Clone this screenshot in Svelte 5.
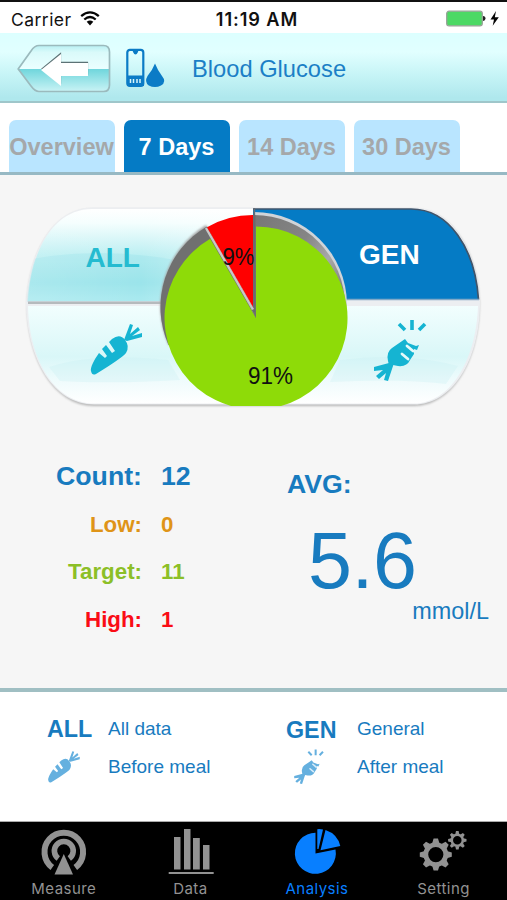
<script>
  const tabs = ['Overview', '7 Days', '14 Days', '30 Days'];
  const active = '7 Days';
  const stats = [
    { label: 'Count:', value: '12', kind: 'count' },
    { label: 'Low:', value: '0', kind: 'low' },
    { label: 'Target:', value: '11', kind: 'target' },
    { label: 'High:', value: '1', kind: 'high' }
  ];
  const teeth = [0, 45, 90, 135, 180, 225, 270, 315];
</script>

{#snippet carrot()}
  <path d="M2 49 C1 46 5 38 10 31 L16 36 L18 34 L13 27 L17 23 L23 31 L26 29 L20 20 L23 17 Q31 11 36 18 Q41 24 37 31 Q33 36 7 52 Q3 54 2 49Z" />
  <path d="M35 18 L41 2 L44 3 L41 12 L49 5 L51 8 L43 14 L53 11 L53 15 L38 19Z" />
{/snippet}

{#snippet bitten()}
  <path d="M17 45 L15 37 Q13 28 19 24 L32 15 L35 19 L43 22 L46 21 L44 26 L41 25 L41 30 L37 36 Q34 43 25 42 L20 41Z" />
  <path d="M29 30 L35 35 M34 22 L40 27" class="cut" />
  <path d="M21 39 L15 57 L11 56 L13 49 L6 55 L3 52 L10 46 L1 47 L1 43 L16 39Z" />
  <path d="M26 0 L32 6 M39 -4 V6 M52 0 L46 6" class="ray" />
{/snippet}

<div class="phone">
  <div class="status">
    <div class="carrier">
      <span>Carrier</span>
      <svg width="20" height="15" viewBox="0 0 20 15">
        <path d="M1.2 5.2 Q10-2.4 18.8 5.2M4.3 8.5 Q10 3.6 15.7 8.5" fill="none" stroke="#050505" stroke-width="2.3" />
        <path d="M6.7 10.8 Q10 8.2 13.3 10.8 L10 14.5Z" fill="#050505" />
      </svg>
    </div>
    <div class="time">11:19 AM</div>
    <svg class="battery" width="54" height="18" viewBox="0 0 54 18">
      <rect x=".7" y="1.2" width="35.6" height="14.6" rx="2.4" fill="#4cd964" stroke="#98a398" stroke-width="1.3" />
      <path d="M37 6 Q39.5 6 39.5 8.6 Q39.5 11 37 11Z" fill="#222" />
      <path d="M50 1 L44.5 9.4 H48 L46.7 15.8 L52.8 7.2 H48.8Z" fill="#050505" />
    </svg>
  </div>

  <header>
    <svg class="back" width="94" height="50" viewBox="0 0 94 50">
      <defs>
        <linearGradient id="glass" x2="0" y2="1">
          <stop offset="0" stop-color="#b8f0f3" /><stop offset=".15" stop-color="#dafafa" />
          <stop offset=".5" stop-color="#eaffff" /><stop offset=".51" stop-color="#6fd6dc" />
          <stop offset="1" stop-color="#c9f3f5" />
        </linearGradient>
      </defs>
      <path d="M1.2 25 L14 7 Q17.5 1.5 22 1.5 H86.5 Q92.5 1.5 92.5 8 V41 Q92.5 47.5 86.5 47.5 H22 Q18 47.5 14 42Z" fill="url(#glass)" stroke="#9bbabd" stroke-width="1.7" />
      <path d="M24 25 L44 8.5 V18 H71 V31 H44 V40 L24 25" fill="#5c7275" transform="translate(.1 -.2)" />
      <path d="M24 26 L44 10 V19 H71 V32 H44 V42Z" fill="#fff" />
    </svg>
    <svg class="meter" width="40" height="40" viewBox="0 0 40 40">
      <rect x="1.3" y="1.8" width="16" height="36" rx="2.6" fill="none" stroke="#0b7bc6" stroke-width="2.2" />
      <path d="M5 1 Q7 2 7 4 Q9.5 9 12 4 Q12 2 14 1Z" fill="#0b7bc6" />
      <path d="M1 27.5 H18 V38 H1Z" fill="#0b7bc6" />
      <path d="M4.5 31 V35 M7.5 31 V35 M11 31 V35 M14 31 V35" stroke="#d8f5fb" stroke-width="1.5" />
      <path d="M29 15.5 Q31.5 22 36 28 Q41 34 35 37.5 Q29 40.5 22.8 37.5 Q18 34 21.5 28 Q26.5 22 29 15.5Z" fill="#0b7bc6" />
    </svg>
    <h1>Blood Glucose</h1>
  </header>

  <nav class="tabs">
    {#each tabs as tab}
      <div class="tab" class:active={tab === active}>{tab}</div>
    {/each}
  </nav>

  <main>
    <svg class="chart" width="507" height="240" viewBox="0 174 507 240">
      <defs>
        <linearGradient id="all" x2="0" y2="1">
          <stop offset="0" stop-color="#fff" /><stop offset=".15" stop-color="#f4fefe" />
          <stop offset=".5" stop-color="#bceff2" /><stop offset=".8" stop-color="#a3e7ed" />
          <stop offset="1" stop-color="#b6eef3" />
        </linearGradient>
        <linearGradient id="meal" x2="0" y2="1">
          <stop offset="0" stop-color="#f2fefe" /><stop offset=".52" stop-color="#d9f7f8" />
          <stop offset=".75" stop-color="#eefbfc" /><stop offset="1" stop-color="#fff" />
        </linearGradient>
        <linearGradient id="side">
          <stop offset="0" stop-color="#fff" stop-opacity=".15" /><stop offset=".5" stop-color="#fff" stop-opacity="0" />
          <stop offset="1" stop-color="#fff" stop-opacity=".45" />
        </linearGradient>
        <linearGradient id="rim" x1="0" x2="1" y2=".8">
          <stop offset="0" stop-color="#777" /><stop offset=".45" stop-color="#858585" />
          <stop offset=".7" stop-color="#a8a8a8" /><stop offset="1" stop-color="#777" />
        </linearGradient>
        <filter id="soft" x="-5%" y="-5%" width="110%" height="110%"><feGaussianBlur stdDeviation="1" /></filter>
        <clipPath id="upper"><path d="M27 302 C30 248 55 209 92 209 H253 V302Z" /></clipPath>
        <clipPath id="lower"><rect x="150" y="180" width="220" height="226" /></clipPath>
      </defs>
      <path d="M27 303 C30 247 57 209 93 209 H413 C451 209 477 249 479.5 302 C480 362 451 406 414 406 H94 C54 406 27 360 27 303Z" fill="#b5b5b5" filter="url(#soft)" />
      <path d="M26 303 C29 247 56 207.5 92 207.5 H413 C451 208 477 249 480 302 C480 362 451 404.5 414 404.5 H94 C54 404.5 27 360 26 303Z" fill="#eceef1" />
      <path d="M28 301 C31 248 55 209 92 209 H253 V301Z" fill="url(#all)" />
      <path d="M20 261 Q103 244 190 263 V302 H20Z" fill="#80dce3" opacity=".22" clip-path="url(#upper)" />
      <path d="M28 301 C31 248 55 209 92 209 H253 V301Z" fill="url(#side)" />
      <path d="M28 306 H478 C476 362 449 403.5 414 403.5 H94 C56 403.5 29 362 28 306Z" fill="url(#meal)" />
      <path d="M49 367 Q95 352 168 360 L180 380 Q110 384 60 381Z M340 360 Q405 352 458 366 L446 384 Q400 378 330 382Z" fill="#c8eff1" opacity=".3" />
      <path d="M28 302.8 H170" stroke="#b5babd" stroke-width="2.4" />
      <path d="M253 209 H411 C449 209 475 248 478.5 299.5 H253Z" fill="#057bc5" />
      <path d="M253 209 H411 C449 209 475 248 478.5 299.5" fill="none" stroke="#40546a" stroke-width="1.7" />
      <path d="M345 299.5 H479" stroke="#82a9c7" stroke-width="1.3" />
      <path d="M254 212 A93 93 0 0 1 347 304 L345 320 H254Z" fill="#d0d4d8" />
      <path d="M254 215 A91 91 0 0 1 345 306 L344 320 H254Z" fill="url(#rim)" />
      <path d="M206 225 A95 95 0 0 0 168.5 345 L256 318Z" fill="#a5a5a5" filter="url(#soft)" />
      <path d="M207 226.5 A93 93 0 0 0 168.5 345 L256 318Z" fill="#707070" />
      <g clip-path="url(#lower)">
        <path d="M256 318 L256 226.5 A91.5 91.5 0 1 1 210.2 238.8Z" fill="#8edb08" />
      </g>
      <path d="M208 230 L256 318 L255.4 215 H253 V307Z" fill="#707070" />
      <path d="M254.3 208 V312" stroke="#666b72" stroke-width="1.7" />
      <path d="M206 228 L253 309.5" stroke="#c8c8c8" stroke-width="2.4" />
      <path d="M253 307 L207 227.2 A92 92 0 0 1 253 215Z" fill="#f00" />
      <g class="label" font-size="23">
        <text x="222.5" y="265" textLength="32" lengthAdjust="spacingAndGlyphs">9%</text>
        <text x="248" y="384" textLength="45" lengthAdjust="spacingAndGlyphs">91%</text>
      </g>
      <g font-size="28" font-weight="700">
        <text x="85.5" y="266.5" fill="#25bbd0">ALL</text>
        <text x="359" y="264" fill="#fff">GEN</text>
      </g>
      <g transform="translate(89 322)" class="veg">{@render carrot()}</g>
      <g transform="translate(373 324)" class="veg">{@render bitten()}</g>
    </svg>

    <section class="summary">
      <div class="stats">
        {#each stats as s}
          <div class="row {s.kind}"><span>{s.label}</span><b>{s.value}</b></div>
        {/each}
      </div>
      <div class="average">
        <div class="avg">AVG:</div>
        <div class="number">5.6</div>
        <div class="unit">mmol/L</div>
      </div>
    </section>
  </main>

  <section class="legend">
    <div class="key"><b>ALL</b><span>All data</span></div>
    <div class="key second"><b class="low-set">GEN</b><span>General</span></div>
    <div class="key">
      <i><svg width="34" height="34" viewBox="0 0 55 55">{@render carrot()}</svg></i><span>Before meal</span>
    </div>
    <div class="key second">
      <i class="eaten"><svg width="36" height="35" viewBox="0 -5 58 62">{@render bitten()}</svg></i><span>After meal</span>
    </div>
  </section>

  <footer>
    <div class="item">
      <svg width="50" height="50" viewBox="0 0 50 50">
        <g fill="none" stroke="#929292">
          <path d="M14.3 38.5 A19.3 19.3 0 1 1 37.3 38.5" stroke-width="6" />
          <path d="M20.3 29.5 A9.4 9.4 0 1 1 31.3 29.5" stroke-width="5.6" />
        </g>
        <path d="M25.8 25 L35 45.5 H16.5Z" fill="#929292" stroke="#000" stroke-width="3" paint-order="stroke" />
      </svg>
      <span>Measure</span>
    </div>
    <div class="item">
      <svg width="50" height="50" viewBox="0 0 50 50">
        <path d="M9 8 H15.5 V40.5 H9Z M19 0 H25.5 V40.5 H19Z M28 9 H34.8 V40.5 H28Z M38 16 H44.5 V40.5 H38Z M3.7 43 H48.7 V45 H3.7Z" fill="#929292" />
      </svg>
      <span>Data</span>
    </div>
    <div class="item on">
      <svg width="50" height="50" viewBox="0 0 50 50">
        <path d="M24.5 24.5 V3.8 A20.5 20.5 0 1 0 44.5 20.5Z" fill="#087fff" />
        <path d="M26.3 20 V.2 Q29.5 -.1 32 .6 L27.5 20Z M34.5 1 Q46.5 5 49.3 17 L29.5 21.2Z" fill="#087fff" />
      </svg>
      <span>Analysis</span>
    </div>
    <div class="item">
      <svg width="50" height="50" viewBox="0 0 50 50">
        <g transform="translate(17.8 25.6)">
          <circle r="10" fill="none" stroke="#929292" stroke-width="4.8" />
          {#each teeth as a}
            <path d="M-3.7 -11 L-2.2 -16 H2.2 L3.7 -11Z" fill="#929292" transform="rotate({a})" />
          {/each}
        </g>
        <g transform="translate(39.3 11.3)">
          <circle r="5.5" fill="none" stroke="#929292" stroke-width="2.5" />
          {#each teeth as a}
            <path d="M-2 -6 L-1.3 -9.2 H1.3 L2 -6Z" fill="#929292" transform="rotate({a})" />
          {/each}
        </g>
      </svg>
      <span>Setting</span>
    </div>
  </footer>
</div>

<style>
  :global(body) { margin: 0; background: #fff; }
  .phone {
    width: 507px; height: 900px; overflow: hidden; box-sizing: border-box;
    display: flex; flex-direction: column; background: #fff; color: #187bbf;
    font-family: "Liberation Sans", Arial, sans-serif;
  }
  .phone > * { flex: none; }
  svg { display: block; overflow: visible; }
  .status {
    height: 33px; box-sizing: border-box; border-top: 2px solid #111; color: #111;
    display: grid; grid-template-columns: 190px 134px 1fr; align-items: center;
    font: 17.5px/31px Inter, sans-serif;
  }
  .carrier { display: flex; align-items: center; gap: 8px; padding-left: 11px; }
  .carrier span { letter-spacing: .45px; padding-top: 2px; }
  .time { text-align: center; font-size: 18.2px; font-weight: 600; white-space: nowrap; letter-spacing: .9px; padding-top: 2px; }
  .battery { justify-self: end; margin-right: 7px; }
  header {
    height: 70px; box-sizing: border-box; display: flex; align-items: flex-start;
    padding-left: 17px; border-bottom: 2px solid #9fc6ca;
    background: linear-gradient(#dcffff, #e1ffff 28%, #c6f4f6 62%, #afe8ed 95%);
  }
  .back { margin-top: 11px; }
  .meter { margin: 15px 0 0 15px; }
  h1 { margin: 22px 0 0 26px; font-size: 23.7px; line-height: 28px; font-weight: 400; color: #1b7fc6; }
  .tabs {
    height: 72px; box-sizing: border-box; padding: 17px 0 0 8.5px; display: flex;
    gap: 9px; align-items: flex-start; border-bottom: 3px solid #97b9c4;
  }
  .tab {
    width: 106px; height: 52px; border-radius: 7px 7px 0 0; background: #b9e5ff;
    color: #a5a8aa; font-size: 23.5px; font-weight: 700; line-height: 54px; text-align: center; white-space: nowrap;
  }
  .tab.active { background: #057bc5; color: #fff; }
  main { height: 513px; background: #f6f6f6; }
  .chart { margin-top: -1px; }
  .label { fill: #111; }
  .veg { fill: #15b4d2; }
  .cut { fill: none; stroke: #e5fafa; stroke-width: 2.8; stroke-linecap: round; }
  .ray { fill: none; stroke: #15b4d2; stroke-width: 3.6; }
  .summary { display: flex; height: 260px; }
  .stats { width: 254px; padding-top: 38px; box-sizing: border-box; }
  .row {
    display: grid; grid-template-columns: 142px 1fr; column-gap: 19px; height: 47.5px; line-height: 49px;
    text-align: right; font-size: 22.3px; font-weight: 700;
  }
  .row b { text-align: left; }
  .count { font-size: 26.7px; color: #187bbf; }
  .low { color: #df9418; }
  .target { color: #8cbf27; }
  .high { color: #fa0c15; }
  .average { width: 253px; display: flex; flex-direction: column; box-sizing: border-box; padding: 55px 18px 0 33px; }
  .avg { font-size: 26.7px; line-height: 30px; font-weight: 700; }
  .number { font-size: 79px; line-height: 80px; margin: 22px 0 0 21px; letter-spacing: -.5px; }
  .unit { font-size: 23.4px; line-height: 28px; text-align: right; margin-top: -4px; }
  .legend {
    height: 134px; box-sizing: border-box; border-top: 4px solid #a0bfc3; border-bottom: 1px solid #aaa;
    display: grid; grid-template-columns: 239px 1fr; grid-template-rows: 38px 38px; padding: 18px 0 0 47px;
  }
  .key { display: grid; grid-template-columns: 61px 1fr; line-height: 38px; font-size: 19px; }
  .key.second { grid-template-columns: 71px 1fr; }
  .key b { font-size: 23.3px; }
  .key b.low-set { padding-top: 1px; }
  .key i { padding-top: 2px; }
  .key i.eaten { padding: 1px 0 0 6px; }
  .legend svg { fill: #65b0df; }
  .legend .cut { stroke: #d9edfa; }
  .legend .ray { stroke: #65b0df; }
  footer { height: 78px; background: #000; display: grid; grid-template-columns: repeat(4, 126.6px); color: #929292; }
  .item { display: flex; flex-direction: column; align-items: center; padding-top: 7px; }
  .item span { font: 15px/18px Inter, sans-serif; letter-spacing: .45px; margin: 1px 0 0 1px; }
  .item.on { color: #087fff; }
</style>
